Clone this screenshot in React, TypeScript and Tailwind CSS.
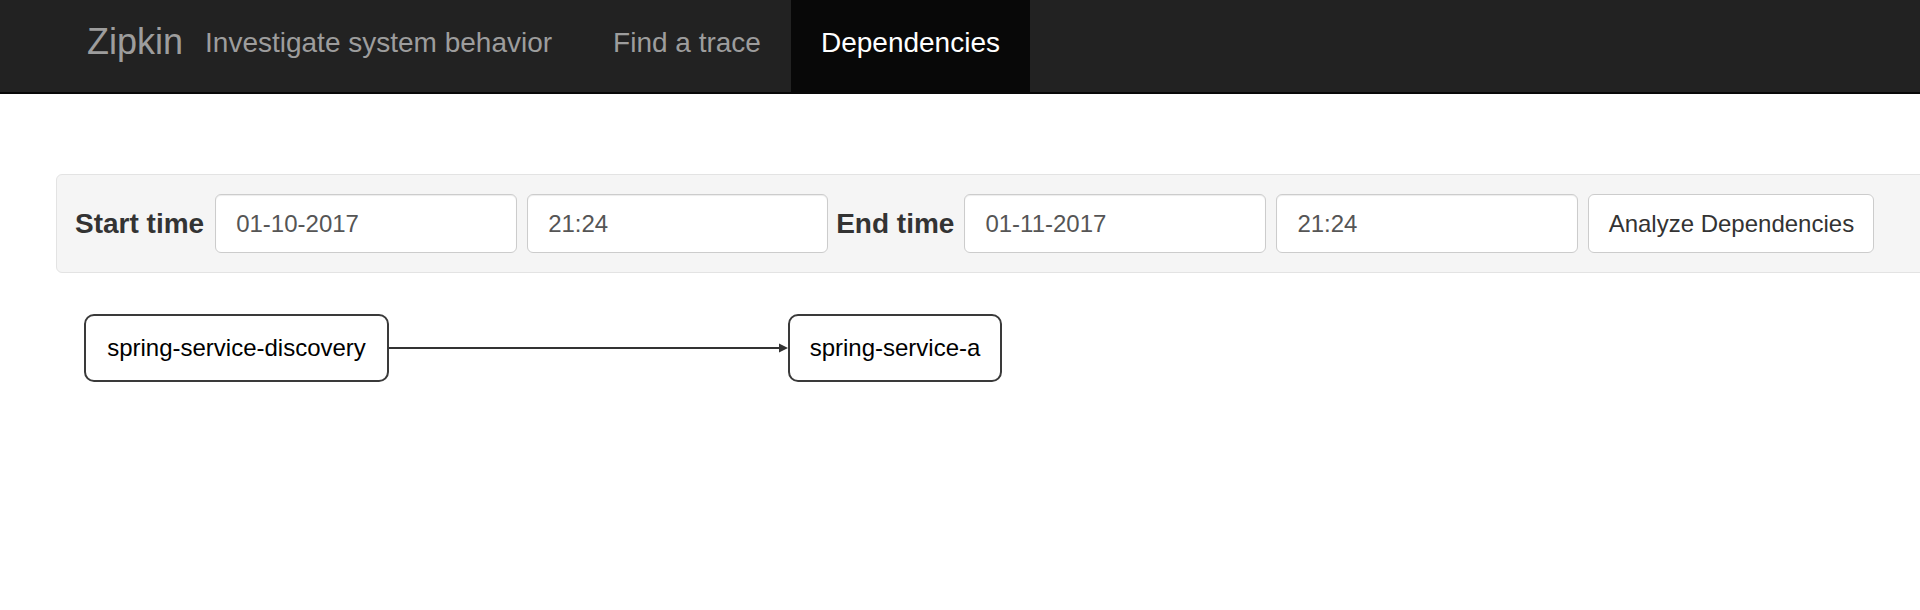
export default function App() {
  return (
    <div className="min-h-screen overflow-hidden bg-white font-['Liberation_Sans',Arial,sans-serif]">
      {/* Navbar */}
      <nav className="flex h-[94px] items-stretch border-b-2 border-[#080808] bg-[#222222]">
        <div className="flex items-center pb-[9px] pl-[87px] text-[36px] text-[#9d9d9d]">Zipkin</div>
        <div className="ml-[22px] flex items-center pb-[6px] text-[28px] text-[#9d9d9d]">
          Investigate system behavior
        </div>
        <a className="ml-[31px] flex items-center px-[30px] pb-[6px] text-[28px] text-[#9d9d9d]">
          Find a trace
        </a>
        <a className="flex items-center bg-[#080808] px-[30px] pb-[6px] text-[28px] text-white">
          Dependencies
        </a>
      </nav>

      {/* Search form */}
      <div className="-mr-[20px] ml-[56px] mt-[80px] rounded-[6px] border border-[#e3e3e3] bg-[#f5f5f5] py-[19px] pl-[18px]">
        <div className="flex items-center">
          <label className="text-[28px] font-bold text-[#333]">Start time</label>
          <input
            readOnly
            value="01-10-2017"
            className="ml-[11px] h-[59px] w-[302px] rounded-[6px] border border-[#ccc] bg-white pl-[20px] text-[24px] text-[#555] shadow-[inset_0_1px_1px_rgba(0,0,0,0.075)] outline-none"
          />
          <input
            readOnly
            value="21:24"
            className="ml-[10px] h-[59px] w-[301px] rounded-[6px] border border-[#ccc] bg-white pl-[20px] text-[24px] text-[#555] shadow-[inset_0_1px_1px_rgba(0,0,0,0.075)] outline-none"
          />
          <label className="ml-[8px] text-[28px] font-bold text-[#333]">End time</label>
          <input
            readOnly
            value="01-11-2017"
            className="ml-[10px] h-[59px] w-[302px] rounded-[6px] border border-[#ccc] bg-white pl-[20px] text-[24px] text-[#555] shadow-[inset_0_1px_1px_rgba(0,0,0,0.075)] outline-none"
          />
          <input
            readOnly
            value="21:24"
            className="ml-[10px] h-[59px] w-[302px] rounded-[6px] border border-[#ccc] bg-white pl-[20px] text-[24px] text-[#555] shadow-[inset_0_1px_1px_rgba(0,0,0,0.075)] outline-none"
          />
          <button className="ml-[10px] h-[59px] w-[286px] rounded-[6px] border border-[#ccc] bg-white text-[24px] text-[#333]">
            Analyze Dependencies
          </button>
        </div>
      </div>

      {/* Dependency graph */}
      <div className="ml-[84px] mt-[41px] flex items-center">
        <div className="flex h-[68px] w-[305px] items-center justify-center rounded-[10px] border-2 border-[#3a3a3a] bg-white text-[24px] text-black">
          spring-service-discovery
        </div>
        <svg width="399" height="12" viewBox="0 0 399 12" className="block">
          <line x1="0" y1="6" x2="392" y2="6" stroke="#333" strokeWidth="2" />
          <polygon points="390,1.5 399,6 390,10.5" fill="#333" />
        </svg>
        <div className="flex h-[68px] w-[214px] items-center justify-center rounded-[10px] border-2 border-[#3a3a3a] bg-white text-[24px] text-black">
          spring-service-a
        </div>
      </div>
    </div>
  );
}
